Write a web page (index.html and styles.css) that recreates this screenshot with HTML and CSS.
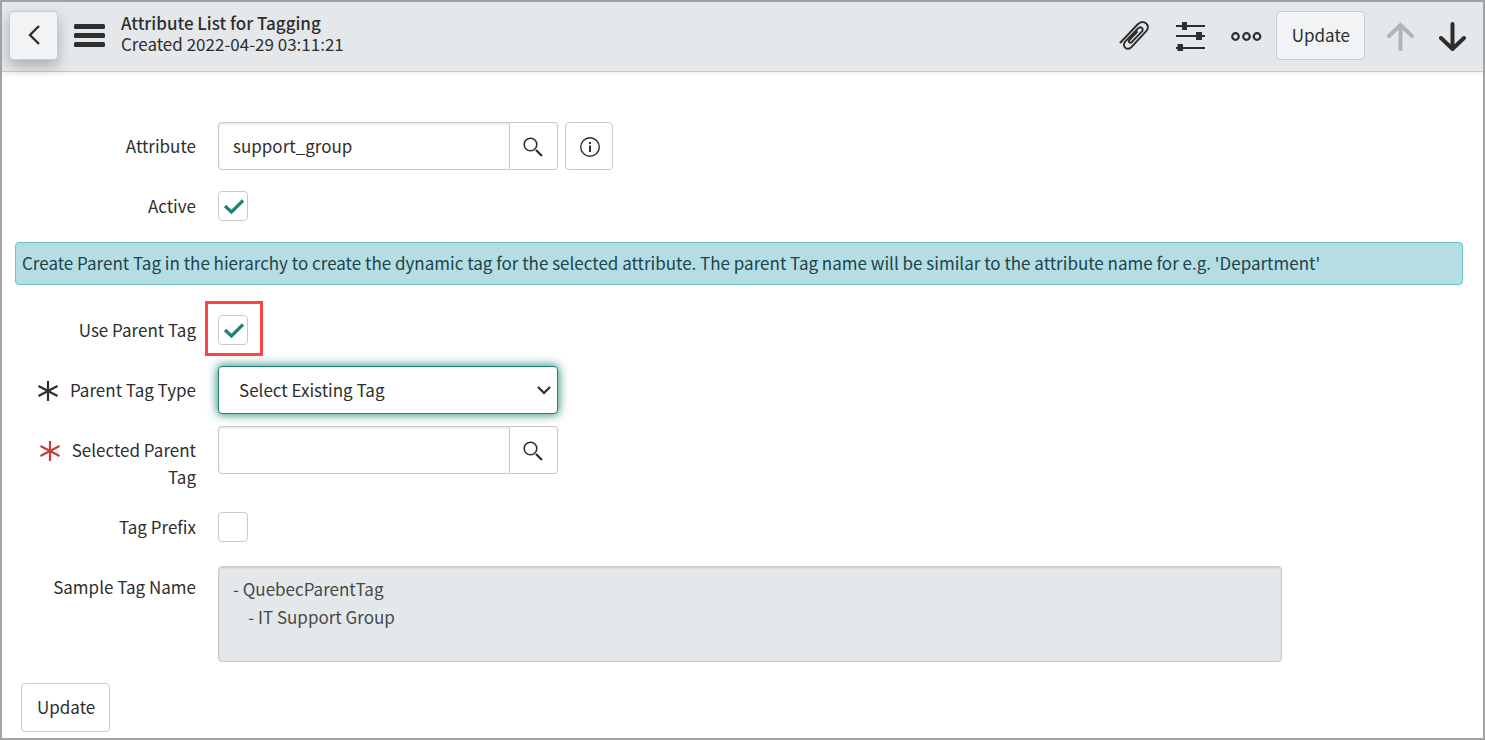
FILE: index.html
```
<!DOCTYPE html>
<html lang="en">

<head>
    <meta charset="UTF-8">
    <meta name="viewport" content="width=device-width, initial-scale=1.0">
    <title>Attribute List for Tagging</title>
    <link rel="stylesheet" href="styles.css">
</head>

<body>
    <header class="navbar">
        <button type="button" class="btn back" aria-label="Back">
            <svg width="14" height="22" viewBox="0 0 14 22"><path d="M12 1 3 10l9 9" fill="none" stroke="currentColor" stroke-width="2.4"/></svg>
        </button>
        <button type="button" class="icon-btn menu" aria-label="Menu">
            <svg width="31" height="24" viewBox="0 0 31 24" fill="currentColor"><rect y="0" width="31" height="5" rx="1.5"/><rect y="9" width="31" height="5" rx="1.5"/><rect y="18" width="31" height="5" rx="1.5"/></svg>
        </button>
        <div class="title">
            <h1>Attribute List for Tagging</h1>
            <p>Created 2022-04-29 03:11:21</p>
        </div>
        <div class="tools">
            <button type="button" class="icon-btn" aria-label="Attachments">
                <svg width="31" height="31" viewBox="0 0 31 31"><path d="M1.500 22.500 18.500 4.500c3-3 6.300-3.200 8.700-1s2.400 5.300-.4 8.200L12.500 27c-2.200 2.200-4.700 2.200-6.400.6s-1.700-4.200.5-6.400L19 8.500c1.300-1.300 3-1.400 4-.5s.9 2.600-.4 3.900L12.800 22c-.9.9-2 .9-2.600.3s-.6-1.600.3-2.500L18 12" fill="none" stroke="currentColor" stroke-width="1.900" stroke-linecap="round"/></svg>
            </button>
            <button type="button" class="icon-btn" aria-label="Personalize form">
                <svg width="31" height="31" viewBox="0 0 31 31" fill="currentColor"><path d="M1 5h29v2H1zM1 15h29v2H1zM1 27h29v2H1zM7 2h5v8H7zM21 12h6v8h-6zM2.500 24H8v7H2.500z"/></svg>
            </button>
            <button type="button" class="icon-btn" aria-label="More options">
                <svg width="31" height="31" viewBox="0 0 31 31" fill="none" stroke="currentColor" stroke-width="2.200"><circle cx="4.500" cy="16.500" r="3.300"/><circle cx="15.500" cy="16.500" r="3.300"/><circle cx="26" cy="16.500" r="3.300"/></svg>
            </button>
        </div>
        <button type="submit" form="tagForm" class="btn">Update</button>
        <div class="record-nav">
            <button type="button" class="icon-btn" aria-label="Previous record" disabled>
                <svg width="31" height="31" viewBox="0 0 31 31"><path d="M15.500 30V5M4 16 15.500 5 27 16" fill="none" stroke="currentColor" stroke-width="4" stroke-linecap="round"/></svg>
            </button>
            <button type="button" class="icon-btn" aria-label="Next record">
                <svg width="31" height="31" viewBox="0 0 31 31"><path d="M15.500 4v25M4 18l11.500 11L27 18" fill="none" stroke="currentColor" stroke-width="4" stroke-linecap="round"/></svg>
            </button>
        </div>
    </header>

    <form id="tagForm" class="form">
        <div class="row">
            <label for="attribute">Attribute</label>
            <div class="control">
                <div class="lookup">
                    <input type="text" id="attribute" value="support_group">
                    <button type="button" class="lookup-btn" aria-label="Look up attribute">
                        <svg width="22" height="22" viewBox="0 0 22 22"><circle cx="7.500" cy="9.500" r="6.300" fill="none" stroke="currentColor" stroke-width="1.600"/><path d="m13 15 6 6" stroke="currentColor" stroke-width="2.200"/></svg>
                    </button>
                </div>
                <button type="button" class="info-btn" aria-label="Preview record">
                    <svg width="22" height="22" viewBox="0 0 22 22"><circle cx="12" cy="12" r="9.300" fill="none" stroke="currentColor" stroke-width="1.400"/><path d="M11 7h2v2h-2zM11 10.500h2V17h-2z" fill="currentColor"/></svg>
                </button>
            </div>
        </div>
        <div class="row">
            <label for="active">Active</label>
            <div class="control">
                <input type="checkbox" id="active" checked>
            </div>
        </div>

        <div class="message">Create Parent Tag in the hierarchy to create the dynamic tag for the selected attribute. The parent Tag name will be similar to the attribute name for e.g. 'Department'</div>

        <div class="row">
            <label for="useParent">Use Parent Tag</label>
            <div class="control">
                <span class="highlight"><input type="checkbox" id="useParent" checked></span>
            </div>
        </div>
        <div class="row">
            <label for="parentType"><svg class="star" width="20" height="20" viewBox="0 0 20 20"><path d="M10 0v20M.5 5l19 10M19.500 5l-19 10" stroke="currentColor" stroke-width="2.200"/></svg>Parent Tag Type</label>
            <div class="control">
                <select id="parentType">
                    <option>Select Existing Tag</option>
                </select>
            </div>
        </div>
        <div class="row">
            <label for="parentTag"><svg class="star required" width="20" height="20" viewBox="0 0 20 20"><path d="M10 0v20M.5 5l19 10M19.500 5l-19 10" stroke="currentColor" stroke-width="2.200"/></svg>Selected Parent Tag</label>
            <div class="control">
                <div class="lookup">
                    <input type="text" id="parentTag">
                    <button type="button" class="lookup-btn" aria-label="Look up parent tag">
                        <svg width="22" height="22" viewBox="0 0 22 22"><circle cx="7.500" cy="9.500" r="6.300" fill="none" stroke="currentColor" stroke-width="1.600"/><path d="m13 15 6 6" stroke="currentColor" stroke-width="2.200"/></svg>
                    </button>
                </div>
            </div>
        </div>
        <div class="row">
            <label for="prefix">Tag Prefix</label>
            <div class="control">
                <input type="checkbox" id="prefix">
            </div>
        </div>
        <div class="row">
            <label for="sample">Sample Tag Name</label>
            <div class="control sample">
                <textarea id="sample" readonly>- QuebecParentTag
    - IT Support Group</textarea>
            </div>
        </div>

        <button type="submit" class="btn submit">Update</button>
    </form>
</body>

</html>
```

FILE: styles.css
```
* {
    box-sizing: border-box;
}

body {
    margin: 0;
    min-height: 100vh;
    border: 2px solid #a2a2a2;
    background: #fff;
    color: #2e2e2e;
    font-family: "Noto Sans CJK SC", "Noto Sans", sans-serif;
    font-size: 17px;
    line-height: 27px;
}

button,
input,
select,
textarea {
    margin: 0;
    font: inherit;
    color: inherit;
}

svg {
    display: block;
}

/* header */
.navbar {
    display: flex;
    align-items: center;
    height: 70px;
    padding: 0 15px 2px 7px;
    background: #e4e8eb;
    border-bottom: 1px solid #c5c8ca;
    box-shadow: 0 2px 4px rgba(0, 0, 0, 0.06);
}

.btn {
    height: 49px;
    padding: 0 14px 2px 15px;
    background: #f1f3f5;
    border: 1px solid #c9cbcd;
    border-radius: 4px;
}

.back {
    display: flex;
    align-items: center;
    justify-content: center;
    width: 49px;
    padding: 0;
    box-shadow: 0 6px 14px rgba(0, 0, 0, 0.25);
}

.icon-btn {
    padding: 0;
    border: none;
    background: none;
}

.icon-btn:disabled {
    color: #b3b4b5;
}

.menu {
    margin: 0 16px;
}

.title {
    margin-right: auto;
    padding-bottom: 6px;
    line-height: 21px;
}

.title h1,
.title p {
    margin: 0;
    font-size: 17px;
    font-weight: 400;
}

.title h1 {
    font-weight: 500;
}

.tools {
    display: flex;
    gap: 25px;
    margin-right: 14px;
}

.record-nav {
    display: flex;
    gap: 21px;
    margin-left: 20px;
}

/* form */
.form {
    display: flex;
    flex-direction: column;
    gap: 12px;
    padding: 50px 20px 6px 13px;
}

.row {
    display: grid;
    grid-template-columns: 181px 1fr;
    column-gap: 22px;
    min-height: 48px;
}

.row label {
    padding: 10px 0 1px;
    text-align: right;
}

.star {
    display: inline-block;
    margin-right: 12px;
    vertical-align: -4px;
}

.required {
    color: #c83c36;
}

.control {
    display: flex;
    align-items: center;
    gap: 7px;
    height: 48px;
}

.lookup {
    display: flex;
    width: 340px;
    height: 48px;
}

.lookup input {
    flex: 1;
    min-width: 0;
    padding: 0 14px 2px;
    border: 1px solid #c9c9c9;
    border-radius: 4px 0 0 4px;
    box-shadow: inset 0 1px 2px rgba(0, 0, 0, 0.12);
}

.lookup-btn,
.info-btn {
    display: flex;
    align-items: center;
    justify-content: center;
    width: 48px;
    height: 48px;
    padding: 0;
    background: #fff;
    border: 1px solid #c9c9c9;
    border-radius: 4px;
}

.lookup-btn {
    border-left: none;
    border-radius: 0 4px 4px 0;
}

input[type="checkbox"] {
    appearance: none;
    display: block;
    width: 30px;
    height: 30px;
    background: #fff;
    border: 1px solid #c9c9c9;
    border-radius: 4px;
}

input[type="checkbox"]:checked {
    background: url("data:image/svg+xml,%3Csvg xmlns='http://www.w3.org/2000/svg' viewBox='0 0 28 28'%3E%3Cpath d='M6 14l6.500 6L24 8.500' fill='none' stroke='%231f8476' stroke-width='3.200'/%3E%3C/svg%3E") center no-repeat;
}

.highlight {
    position: relative;
}

.highlight::after {
    content: "";
    position: absolute;
    inset: -14px -15px -11px -13px;
    border: 3px solid #ff4343;
    pointer-events: none;
}

select {
    appearance: none;
    width: 340px;
    height: 48px;
    padding: 0 40px 2px 20px;
    background: #fff url("data:image/svg+xml,%3Csvg xmlns='http://www.w3.org/2000/svg' width='14' height='9' viewBox='0 0 14 9'%3E%3Cpath d='M1 1l6 6 6-6' fill='none' stroke='%232e2e2e' stroke-width='2.200'/%3E%3C/svg%3E") right 6px center no-repeat;
    border: 1px solid #1f8476;
    border-radius: 4px;
    box-shadow: 0 0 10px 1px rgba(31, 132, 118, 0.9);
}

.message {
    margin-bottom: 9px;
    padding: 6px 6px 8px;
    background: #b5dde4;
    border: 1px solid #6cbfcc;
    border-radius: 4px;
    color: #1f434b;
}

.sample {
    height: auto;
    padding: 3px 181px 0 0;
}

textarea {
    display: block;
    width: 100%;
    height: 96px;
    padding: 8px 14px;
    background: #e4e8eb;
    border: 1px solid #c9c9c9;
    border-radius: 4px;
    box-shadow: inset 0 1px 2px rgba(0, 0, 0, 0.12);
    color: #484848;
    line-height: 28px;
    resize: none;
}

.submit {
    align-self: flex-start;
    margin: 9px 0 0 6px;
    background: #fff;
}
```
